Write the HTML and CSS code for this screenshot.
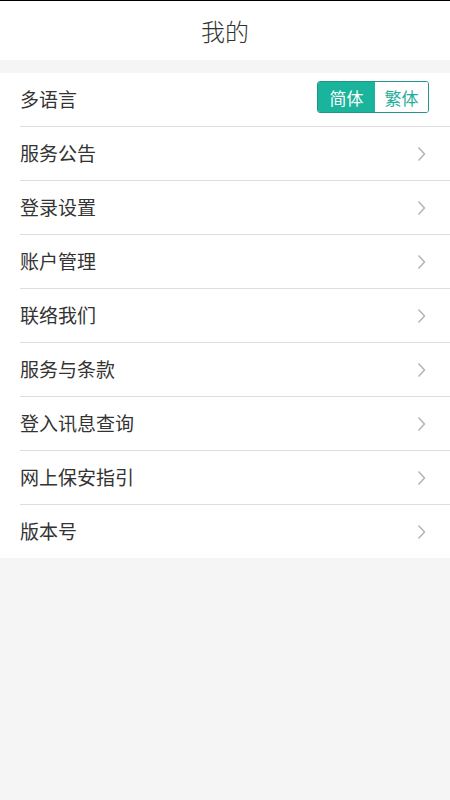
FILE: index.html
```html
<!DOCTYPE html>
<html>
<head>
    <title>我的</title>
    <link rel="stylesheet" href="styles.css">
</head>
<body>
    <div class="header">我的</div>

    <div class="list">
        <div class="row">
            <span class="label">多语言</span>
            <div class="lang-toggle">
                <span class="lang active">简体</span>
                <span class="lang">繁体</span>
            </div>
        </div>
        <div class="row"><span class="label">服务公告</span><svg class="chevron" viewBox="0 0 9 16"><polyline points="1.5,1.5 7.5,8 1.5,14.5"/></svg></div>
        <div class="row"><span class="label">登录设置</span><svg class="chevron" viewBox="0 0 9 16"><polyline points="1.5,1.5 7.5,8 1.5,14.5"/></svg></div>
        <div class="row"><span class="label">账户管理</span><svg class="chevron" viewBox="0 0 9 16"><polyline points="1.5,1.5 7.5,8 1.5,14.5"/></svg></div>
        <div class="row"><span class="label">联络我们</span><svg class="chevron" viewBox="0 0 9 16"><polyline points="1.5,1.5 7.5,8 1.5,14.5"/></svg></div>
        <div class="row"><span class="label">服务与条款</span><svg class="chevron" viewBox="0 0 9 16"><polyline points="1.5,1.5 7.5,8 1.5,14.5"/></svg></div>
        <div class="row"><span class="label">登入讯息查询</span><svg class="chevron" viewBox="0 0 9 16"><polyline points="1.5,1.5 7.5,8 1.5,14.5"/></svg></div>
        <div class="row"><span class="label">网上保安指引</span><svg class="chevron" viewBox="0 0 9 16"><polyline points="1.5,1.5 7.5,8 1.5,14.5"/></svg></div>
        <div class="row"><span class="label">版本号</span><svg class="chevron" viewBox="0 0 9 16"><polyline points="1.5,1.5 7.5,8 1.5,14.5"/></svg></div>
    </div>
</body>
</html>
```

FILE: styles.css
```css
body {
    margin: 0;
    padding: 0;
    background-color: #f5f5f5;
    font-family: "Noto Sans CJK SC", "Noto Sans", sans-serif;
    min-height: 100vh;
}

.header {
    height: 59px;
    background-color: #ffffff;
    border-top: 1px solid #000000;
    display: flex;
    justify-content: center;
    align-items: center;
    font-size: 24px;
    font-weight: 300;
    color: #333333;
    margin-bottom: 13px;
}

.list {
    background-color: #ffffff;
    padding-left: 20px;
}

.row {
    height: 53px;
    display: flex;
    align-items: center;
    justify-content: space-between;
    border-bottom: 1px solid #dddddd;
    padding-right: 24px;
}

.row:last-child {
    border-bottom: none;
}

.label {
    font-size: 19px;
    color: #333333;
    margin-bottom: 3px;
}

/* small grey arrow on the right of each row */
.chevron {
    width: 9px;
    height: 16px;
    fill: none;
    stroke: #b4b4b4;
    stroke-width: 1.5;
}

.lang-toggle {
    display: flex;
    border: 1px solid #23948a;
    border-radius: 3px;
    overflow: hidden;
    margin-right: -3px;
    margin-bottom: 5px;
}

.lang {
    width: 53px;
    height: 30px;
    display: flex;
    justify-content: center;
    align-items: center;
    font-size: 17px;
    color: #1fae9a;
    background-color: #ffffff;
}

.lang.active {
    width: 57px;
    background-color: #1ab39b;
    color: #ffffff;
}
```
